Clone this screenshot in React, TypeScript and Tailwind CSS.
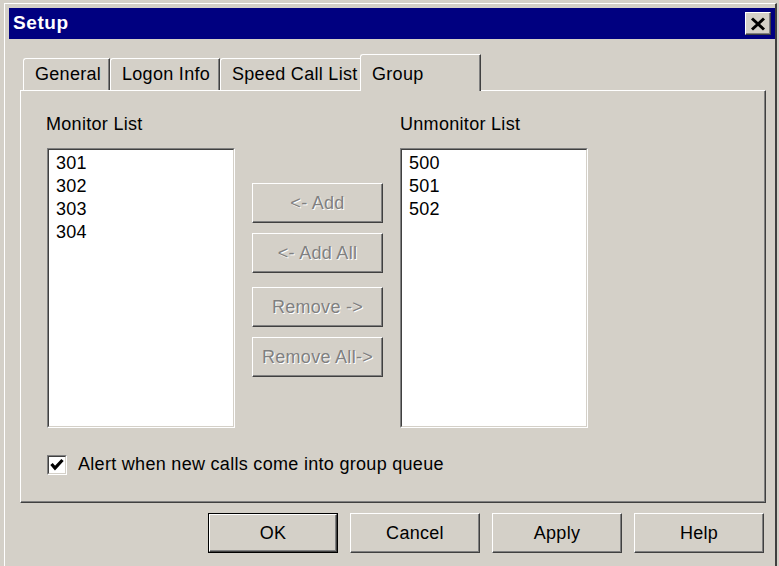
import { ReactNode } from 'react'

const face = { fontFamily: '"Liberation Sans", Arial, sans-serif' }

const monitored = ['301', '302', '303', '304']
const unmonitored = ['500', '501', '502']

const tabs = [
  { label: 'General', width: 'w-[87px]' },
  { label: 'Logon Info', width: 'w-[110px]' },
  { label: 'Speed Call List', width: 'w-[142px]' },
]

// Raised 3D button, Win2k style
const Button = ({
  children,
  disabled,
  isDefault,
  className = '',
}: {
  children: ReactNode
  disabled?: boolean
  isDefault?: boolean
  className?: string
}) => (
  <div
    className={`${className} ${
      isDefault ? 'border border-black' : ''
    } box-border`}
  >
    <button
      className={`w-full h-full flex items-center justify-center bg-[#d4d0c8] border-t border-l border-white border-b border-r border-b-[#404040] border-r-[#404040] shadow-[inset_-1px_-1px_0_#808080] text-[18px] tracking-[0.3px] ${
        disabled
          ? 'text-[#808080] [text-shadow:1px_1px_0_#ffffff]'
          : 'text-black'
      }`}
    >
      {children}
    </button>
  </div>
)

// Sunken white list box
const ListBox = ({ items }: { items: string[] }) => (
  <div className="w-full h-[280px] bg-white border-t border-l border-[#808080] border-b border-r border-b-white border-r-white">
    <div className="w-full h-full border-t border-l border-[#404040] border-b border-r border-b-[#d4d0c8] border-r-[#d4d0c8] pt-[2px] pl-[7px]">
      {items.map((item) => (
        <div key={item} className="h-[23px] leading-[23px] text-[18px] text-black">
          {item}
        </div>
      ))}
    </div>
  </div>
)

const App = () => {
  return (
    <div
      className="w-[779px] h-[566px] bg-[#d4d0c8] pt-[3px] pl-[4px] pr-[2px] overflow-hidden"
      style={face}
    >
      <div className="h-full border-t border-l border-white border-r-2 border-r-[#404040] pt-[4px] pl-[4px] flex flex-col">
        {/* Title bar */}
        <div className="h-[31px] bg-[#000080] flex items-center justify-between pl-[4px] pr-[4px]">
          <span className="text-white font-bold text-[19px] tracking-[0.6px]">Setup</span>
          <div className="w-[26px] h-[23px] bg-[#d4d0c8] border-t border-l border-white border-b border-r border-b-[#404040] border-r-[#404040] shadow-[inset_-1px_-1px_0_#808080] flex items-center justify-center">
            <svg width="16" height="14" viewBox="0 0 16 14">
              <path d="M2 1.5 L14 12.5 M14 1.5 L2 12.5" stroke="#000" strokeWidth="3" />
            </svg>
          </div>
        </div>

        {/* Tab strip */}
        <div className="mt-[15px] ml-[14px] h-[36px] flex items-end tracking-[0.3px]">
          {tabs.map((tab) => (
            <div
              key={tab.label}
              className={`${tab.width} h-[32px] border-t border-l border-white rounded-tl-[3px] border-r border-r-[#404040] shadow-[inset_-1px_0_0_#808080] pl-[11px] flex items-center text-[18px] text-black whitespace-nowrap`}
            >
              {tab.label}
            </div>
          ))}
          <div className="relative z-10 -ml-[2px] -mb-px w-[121px] h-[37px] bg-[#d4d0c8] border-t border-l border-white rounded-tl-[3px] border-r border-r-[#404040] shadow-[inset_-1px_0_0_#808080] pl-[11px] pt-[3px] flex items-center text-[18px] text-black">
            Group
          </div>
        </div>

        {/* Tab page */}
        <div className="ml-[11px] w-[746px] h-[413px] border-t border-l border-white border-b border-r border-b-[#404040] border-r-[#404040] shadow-[inset_-1px_-1px_0_#808080] pt-[23px] pl-[26px] text-[18px] tracking-[0.3px] text-black">
          <div className="flex items-start">
            <div className="w-[188px] flex flex-col">
              <div className="h-[21px] leading-[21px] -ml-px">Monitor List</div>
              <div className="mt-[13px]">
                <ListBox items={monitored} />
              </div>
            </div>

            <div className="ml-[17px] mt-[69px] w-[131px] flex flex-col">
              <Button disabled className="h-[40px]">&lt;- Add</Button>
              <Button disabled className="h-[40px] mt-[10px]">&lt;- Add All</Button>
              <Button disabled className="h-[40px] mt-[14px]">Remove -&gt;</Button>
              <Button disabled className="h-[40px] mt-[10px]">Remove All-&gt;</Button>
            </div>

            <div className="ml-[17px] w-[188px] flex flex-col">
              <div className="h-[21px] leading-[21px]">Unmonitor List</div>
              <div className="mt-[13px]">
                <ListBox items={unmonitored} />
              </div>
            </div>
          </div>

          {/* Alert option */}
          <div className="mt-[23px] flex items-center">
            <div className="w-[20px] h-[20px] bg-white border-t border-l border-[#808080] border-b border-r border-b-white border-r-white">
              <div className="w-full h-full border-t border-l border-[#404040] border-b border-r border-b-[#d4d0c8] border-r-[#d4d0c8] flex items-center justify-center">
                <svg width="14" height="13" viewBox="0 0 14 13">
                  <path d="M1.5 6 L5 10 L12.5 2" stroke="#000" strokeWidth="3.2" fill="none" />
                </svg>
              </div>
            </div>
            <span className="ml-[11px]">Alert when new calls come into group queue</span>
          </div>
        </div>

        {/* Dialog buttons */}
        <div className="mt-[10px] ml-[199px] flex gap-[12px]">
          <Button isDefault className="w-[130px] h-[40px]">OK</Button>
          <Button className="w-[130px] h-[40px]">Cancel</Button>
          <Button className="w-[130px] h-[40px]">Apply</Button>
          <Button className="w-[130px] h-[40px]">Help</Button>
        </div>
      </div>
    </div>
  )
}

export default App
